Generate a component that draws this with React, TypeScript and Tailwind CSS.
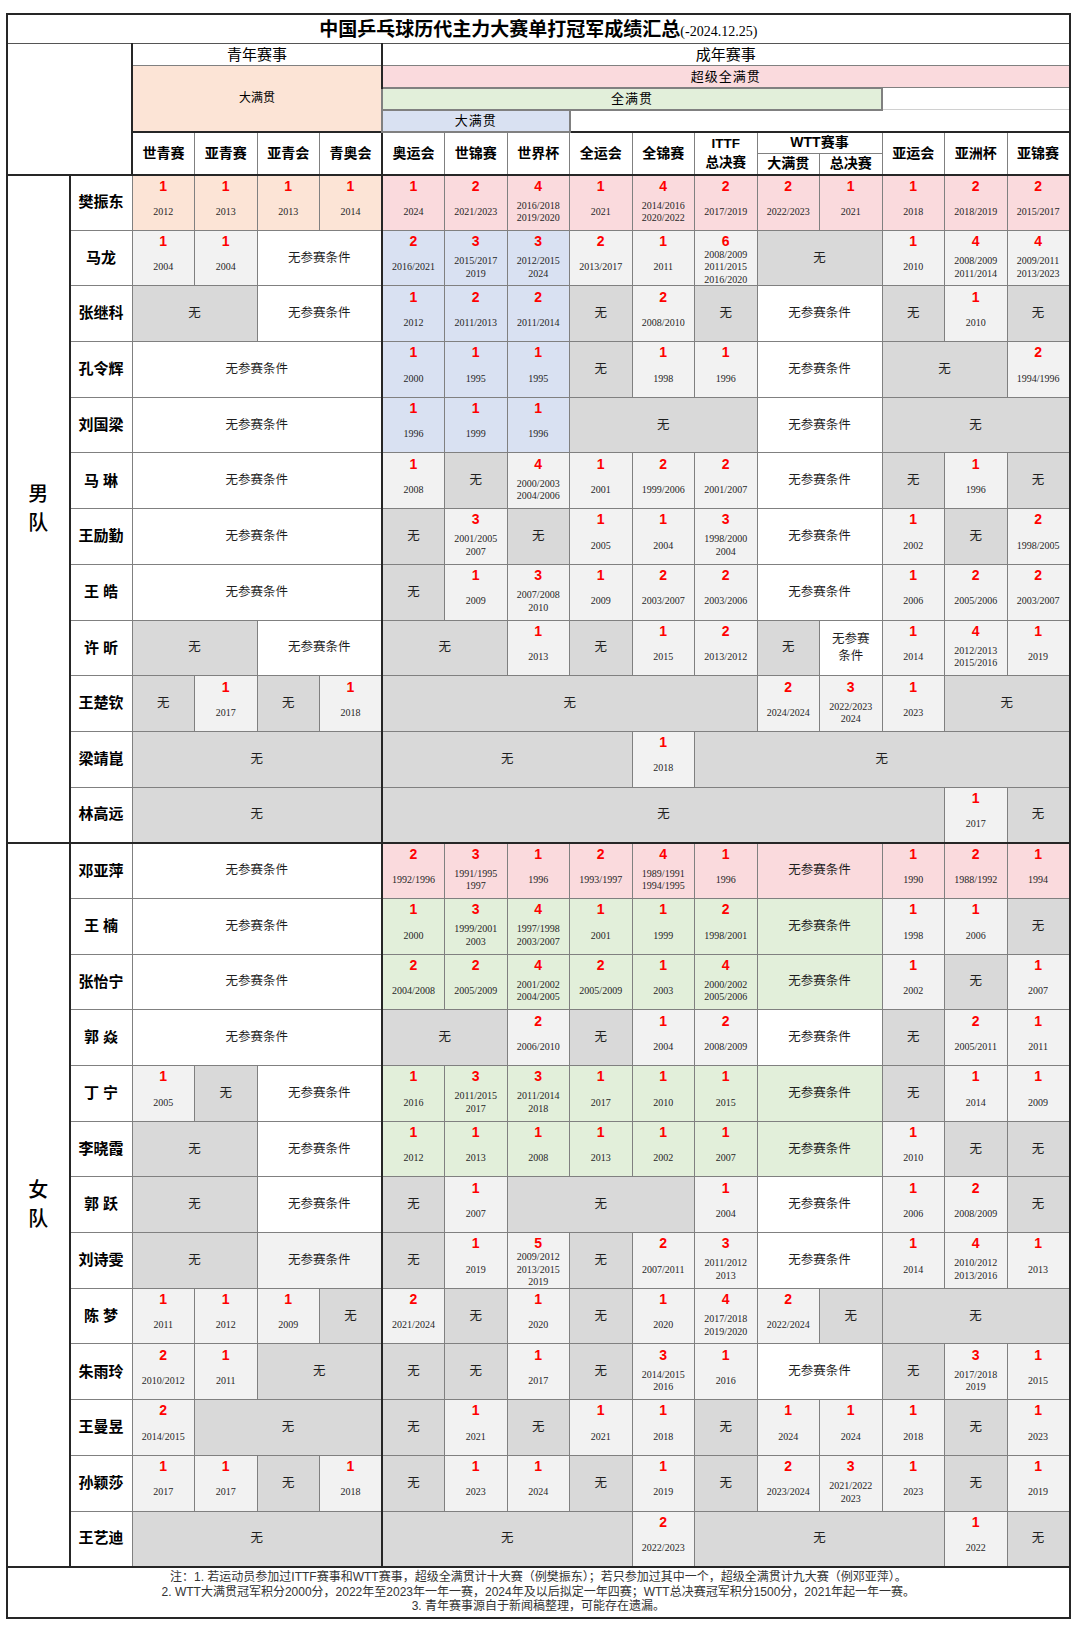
import React from "react";

type Bg = "P" | "K" | "B" | "G" | "L" | "N" | "W";
type Cell = { kind: "win" | "none" | "nc"; span: number; bg: Bg; num?: number; years?: string[]; lines?: string[] };

const w = (num: number, years: string, bg: Bg = "L", span = 1): Cell => ({ kind: "win", span, bg, num, years: years.split("\n") });
const no = (span = 1): Cell => ({ kind: "none", span, bg: "N" });
const nc = (span = 1, bg: Bg = "W", lines: string[] = ["无参赛条件"]): Cell => ({ kind: "nc", span, bg, lines });

const BG: Record<Bg, string> = {
  P: "bg-[#fce4d6]",
  K: "bg-[#fadadd]",
  B: "bg-[#d9e1f2]",
  G: "bg-[#e2efda]",
  L: "bg-[#f2f2f2]",
  N: "bg-[#d9d9d9]",
  W: "bg-white",
};

const men: { name: string; cells: Cell[] }[] = [
  {
    name: "樊振东",
    cells: [
      w(1, "2012", "P"), w(1, "2013", "P"), w(1, "2013", "P"), w(1, "2014", "P"),
      w(1, "2024", "K"), w(2, "2021/2023", "K"), w(4, "2016/2018\n2019/2020", "K"), w(1, "2021", "K"),
      w(4, "2014/2016\n2020/2022", "K"), w(2, "2017/2019", "K"), w(2, "2022/2023", "K"), w(1, "2021", "K"),
      w(1, "2018", "K"), w(2, "2018/2019", "K"), w(2, "2015/2017", "K"),
    ],
  },
  {
    name: "马龙",
    cells: [
      w(1, "2004"), w(1, "2004"), nc(2),
      w(2, "2016/2021", "B"), w(3, "2015/2017\n2019", "B"), w(3, "2012/2015\n2024", "B"),
      w(2, "2013/2017"), w(1, "2011"), w(6, "2008/2009\n2011/2015\n2016/2020"), no(2),
      w(1, "2010"), w(4, "2008/2009\n2011/2014"), w(4, "2009/2011\n2013/2023"),
    ],
  },
  {
    name: "张继科",
    cells: [
      no(2), nc(2), w(1, "2012", "B"), w(2, "2011/2013", "B"), w(2, "2011/2014", "B"),
      no(), w(2, "2008/2010"), no(), nc(2), no(), w(1, "2010"), no(),
    ],
  },
  {
    name: "孔令辉",
    cells: [
      nc(4), w(1, "2000", "B"), w(1, "1995", "B"), w(1, "1995", "B"),
      no(), w(1, "1998"), w(1, "1996"), nc(2), no(2), w(2, "1994/1996"),
    ],
  },
  {
    name: "刘国梁",
    cells: [nc(4), w(1, "1996", "B"), w(1, "1999", "B"), w(1, "1996", "B"), no(3), nc(2), no(3)],
  },
  {
    name: "马 琳",
    cells: [
      nc(4), w(1, "2008"), no(), w(4, "2000/2003\n2004/2006"), w(1, "2001"), w(2, "1999/2006"),
      w(2, "2001/2007"), nc(2), no(), w(1, "1996"), no(),
    ],
  },
  {
    name: "王励勤",
    cells: [
      nc(4), no(), w(3, "2001/2005\n2007"), no(), w(1, "2005"), w(1, "2004"),
      w(3, "1998/2000\n2004"), nc(2), w(1, "2002"), no(), w(2, "1998/2005"),
    ],
  },
  {
    name: "王 皓",
    cells: [
      nc(4), no(), w(1, "2009"), w(3, "2007/2008\n2010"), w(1, "2009"), w(2, "2003/2007"),
      w(2, "2003/2006"), nc(2), w(1, "2006"), w(2, "2005/2006"), w(2, "2003/2007"),
    ],
  },
  {
    name: "许 昕",
    cells: [
      no(2), nc(2), no(2), w(1, "2013"), no(), w(1, "2015"), w(2, "2013/2012"), no(),
      nc(1, "W", ["无参赛", "条件"]), w(1, "2014"), w(4, "2012/2013\n2015/2016"), w(1, "2019"),
    ],
  },
  {
    name: "王楚钦",
    cells: [
      no(), w(1, "2017"), no(), w(1, "2018"), no(6), w(2, "2024/2024"),
      w(3, "2022/2023\n2024"), w(1, "2023"), no(2),
    ],
  },
  { name: "梁靖崑", cells: [no(4), no(4), w(1, "2018"), no(6)] },
  { name: "林高远", cells: [no(4), no(9), w(1, "2017"), no()] },
];

const women: { name: string; cells: Cell[] }[] = [
  {
    name: "邓亚萍",
    cells: [
      nc(4), w(2, "1992/1996", "K"), w(3, "1991/1995\n1997", "K"), w(1, "1996", "K"), w(2, "1993/1997", "K"),
      w(4, "1989/1991\n1994/1995", "K"), w(1, "1996", "K"), nc(2, "K"), w(1, "1990", "K"),
      w(2, "1988/1992", "K"), w(1, "1994", "K"),
    ],
  },
  {
    name: "王 楠",
    cells: [
      nc(4), w(1, "2000", "G"), w(3, "1999/2001\n2003", "G"), w(4, "1997/1998\n2003/2007", "G"),
      w(1, "2001", "G"), w(1, "1999", "G"), w(2, "1998/2001", "G"), nc(2, "G"),
      w(1, "1998"), w(1, "2006"), no(),
    ],
  },
  {
    name: "张怡宁",
    cells: [
      nc(4), w(2, "2004/2008", "G"), w(2, "2005/2009", "G"), w(4, "2001/2002\n2004/2005", "G"),
      w(2, "2005/2009", "G"), w(1, "2003", "G"), w(4, "2000/2002\n2005/2006", "G"), nc(2, "G"),
      w(1, "2002"), no(), w(1, "2007"),
    ],
  },
  {
    name: "郭 焱",
    cells: [
      nc(4), no(2), w(2, "2006/2010"), no(), w(1, "2004"), w(2, "2008/2009"), nc(2),
      no(), w(2, "2005/2011"), w(1, "2011"),
    ],
  },
  {
    name: "丁 宁",
    cells: [
      w(1, "2005"), no(), nc(2), w(1, "2016", "G"), w(3, "2011/2015\n2017", "G"),
      w(3, "2011/2014\n2018", "G"), w(1, "2017", "G"), w(1, "2010", "G"), w(1, "2015", "G"),
      nc(2, "G"), no(), w(1, "2014"), w(1, "2009"),
    ],
  },
  {
    name: "李晓霞",
    cells: [
      no(2), nc(2), w(1, "2012", "G"), w(1, "2013", "G"), w(1, "2008", "G"), w(1, "2013", "G"),
      w(1, "2002", "G"), w(1, "2007", "G"), nc(2, "G"), w(1, "2010"), no(), no(),
    ],
  },
  {
    name: "郭 跃",
    cells: [
      no(2), nc(2), no(), w(1, "2007"), no(3), w(1, "2004"), nc(2), w(1, "2006"),
      w(2, "2008/2009"), no(),
    ],
  },
  {
    name: "刘诗雯",
    cells: [
      no(2), nc(2, "L"), no(), w(1, "2019"), w(5, "2009/2012\n2013/2015\n2019"), no(),
      w(2, "2007/2011"), w(3, "2011/2012\n2013"), nc(2), w(1, "2014"),
      w(4, "2010/2012\n2013/2016"), w(1, "2013"),
    ],
  },
  {
    name: "陈 梦",
    cells: [
      w(1, "2011"), w(1, "2012"), w(1, "2009"), no(), w(2, "2021/2024"), no(), w(1, "2020"),
      no(), w(1, "2020"), w(4, "2017/2018\n2019/2020"), w(2, "2022/2024"), no(), no(3),
    ],
  },
  {
    name: "朱雨玲",
    cells: [
      w(2, "2010/2012"), w(1, "2011"), no(2), no(), no(), w(1, "2017"), no(),
      w(3, "2014/2015\n2016"), w(1, "2016"), nc(2), no(), w(3, "2017/2018\n2019"), w(1, "2015"),
    ],
  },
  {
    name: "王曼昱",
    cells: [
      w(2, "2014/2015"), no(3), no(), w(1, "2021"), no(), w(1, "2021"), w(1, "2018"), no(),
      w(1, "2024"), w(1, "2024"), w(1, "2018"), no(), w(1, "2023"),
    ],
  },
  {
    name: "孙颖莎",
    cells: [
      w(1, "2017"), w(1, "2017"), no(), w(1, "2018"), no(), w(1, "2023"), w(1, "2024"), no(),
      w(1, "2019"), no(), w(2, "2023/2024"), w(3, "2021/2022\n2023"), w(1, "2023"), no(), w(1, "2019"),
    ],
  },
  { name: "王艺迪", cells: [no(4), no(4), w(2, "2022/2023"), no(4), w(1, "2022"), no()] },
];

const cellBase = "border border-[#808080] p-0 text-center align-middle";

function DataCells({ cells, topThick }: { cells: Cell[]; topThick: boolean }) {
  let col = 0;
  return (
    <>
      {cells.map((c, i) => {
        const start = col;
        col += c.span;
        const cls = [
          cellBase,
          BG[c.bg],
          start === 4 ? "border-l-2 border-l-[#262626]" : "",
          topThick ? "border-t-2 border-t-[#262626]" : "",
        ].join(" ");
        if (c.kind === "win") {
          return (
            <td key={i} colSpan={c.span} className={cls}>
              <div className="flex h-[54px] flex-col items-center">
                <div className="h-[20px] shrink-0 font-['Liberation_Sans'] text-[14px] leading-[20px] font-bold text-[#ff0000]">
                  {c.num}
                </div>
                <div className="flex min-h-0 flex-1 flex-col items-center justify-center pb-[1px] font-['Liberation_Serif'] text-[10px] leading-[12.5px] text-[#262626]">
                  {c.years!.map((y) => (
                    <span key={y} className="shrink-0">{y}</span>
                  ))}
                </div>
              </div>
            </td>
          );
        }
        return (
          <td key={i} colSpan={c.span} className={cls}>
            <div className="flex flex-col items-center justify-center text-[12.5px] leading-[17px] text-[#1f1f1f]">
              {c.kind === "none" ? <span>无</span> : c.lines!.map((l) => <span key={l}>{l}</span>)}
            </div>
          </td>
        );
      })}
    </>
  );
}

const colHeads = ["世青赛", "亚青赛", "亚青会", "青奥会", "奥运会", "世锦赛", "世界杯", "全运会", "全锦赛"];

export default function App() {
  return (
    <div className="min-h-[1630px] w-[1080px] bg-white pt-[13px] pl-[6px] font-['Liberation_Sans','Noto_Sans_CJK_SC',sans-serif] text-black">
      <table className="w-[1063px] table-fixed border-collapse border-2 border-[#262626]">
        <colgroup>
          {Array.from({ length: 17 }).map((_, i) => (
            <col key={i} className="w-[62.5px]" />
          ))}
        </colgroup>
        <tbody>
          <tr className="h-[28px]">
            <td colSpan={17} className="border-b border-[#555] p-0 text-center">
              <span className="font-['Noto_Sans_CJK_SC',sans-serif] text-[19px] leading-[26px] font-bold">
                中国乒乓球历代主力大赛单打冠军成绩汇总
              </span>
              <span className="font-['Liberation_Serif',serif] text-[14px]">(-2024.12.25)</span>
            </td>
          </tr>
          <tr className="h-[22px]">
            <td colSpan={2} rowSpan={6} className="border border-[#808080] border-r-2 border-r-[#262626] border-b-2 border-b-[#262626] bg-white" />
            <td colSpan={4} className={cellBase + " text-[15px] leading-[20px]"}>青年赛事</td>
            <td colSpan={11} className={cellBase + " border-l-2 border-l-[#262626] text-[15px] leading-[20px]"}>成年赛事</td>
          </tr>
          <tr className="h-[22px]">
            <td colSpan={4} rowSpan={3} className={cellBase + " bg-[#fce4d6] text-[12px]"}>大满贯</td>
            <td colSpan={11} className={cellBase + " border-l-2 border-l-[#262626] bg-[#fadadd] text-[13px] tracking-[1px]"}>超级全满贯</td>
          </tr>
          <tr className="h-[22px]">
            <td colSpan={8} className={cellBase + " border-2 border-[#262626] bg-[#e2efda] text-[13px] tracking-[1px]"}>全满贯</td>
            <td colSpan={3} className="border border-[#d0d0d0] bg-white" />
          </tr>
          <tr className="h-[22px]">
            <td colSpan={3} className={cellBase + " border-2 border-[#262626] bg-[#d9e1f2] text-[13px] tracking-[1px]"}>大满贯</td>
            <td colSpan={8} className="border border-[#d0d0d0] bg-white" />
          </tr>
          <tr className="h-[21.5px]">
            {colHeads.map((h, i) => (
              <td
                key={h}
                rowSpan={2}
                className={
                  cellBase +
                  " border-t-2 border-t-[#262626] border-b-2 border-b-[#262626] bg-white text-[14px] font-bold" +
                  (i === 4 ? " border-l-2 border-l-[#262626]" : "")
                }
              >
                {h}
              </td>
            ))}
            <td rowSpan={2} className={cellBase + " border-t-2 border-t-[#262626] border-b-2 border-b-[#262626] bg-white text-[13.5px] leading-[19px] font-bold"}>
              <div>ITTF</div>
              <div>总决赛</div>
            </td>
            <td colSpan={2} className={cellBase + " border-t-2 border-t-[#262626] bg-white text-[14px] leading-[19px] font-bold"}>
              WTT赛事
            </td>
            {["亚运会", "亚洲杯", "亚锦赛"].map((h) => (
              <td key={h} rowSpan={2} className={cellBase + " border-t-2 border-t-[#262626] border-b-2 border-b-[#262626] bg-white text-[14px] font-bold"}>
                {h}
              </td>
            ))}
          </tr>
          <tr className="h-[21.5px]">
            <td className={cellBase + " border-b-2 border-b-[#262626] bg-white text-[14px] leading-[19px] font-bold"}>大满贯</td>
            <td className={cellBase + " border-b-2 border-b-[#262626] bg-white text-[14px] leading-[19px] font-bold"}>总决赛</td>
          </tr>

          {men.map((r, i) => (
            <tr key={r.name} className="h-[55.7px]">
              {i === 0 && (
                <td rowSpan={men.length} className="border border-[#808080] border-r-2 border-r-[#262626] bg-white p-0 text-center align-middle">
                  <div className="flex flex-col items-center text-[20px] leading-[29px] font-medium">
                    <span>男</span>
                    <span>队</span>
                  </div>
                </td>
              )}
              <td className={cellBase + " bg-white text-[15px] font-bold whitespace-pre"}>{r.name}</td>
              <DataCells cells={r.cells} topThick={false} />
            </tr>
          ))}

          {women.map((r, i) => (
            <tr key={r.name} className="h-[55.7px]">
              {i === 0 && (
                <td rowSpan={women.length} className="border border-[#808080] border-t-2 border-t-[#262626] border-r-2 border-r-[#262626] bg-white p-0 text-center align-middle">
                  <div className="flex flex-col items-center text-[20px] leading-[29px] font-medium">
                    <span>女</span>
                    <span>队</span>
                  </div>
                </td>
              )}
              <td className={cellBase + " bg-white text-[15px] font-bold whitespace-pre" + (i === 0 ? " border-t-2 border-t-[#262626]" : "")}>
                {r.name}
              </td>
              <DataCells cells={r.cells} topThick={i === 0} />
            </tr>
          ))}

          <tr className="h-[51px]">
            <td colSpan={17} className="border-t-2 border-t-[#262626] p-0 text-center text-[12px] leading-[14.5px] text-[#333]">
              <div>注：1. 若运动员参加过ITTF赛事和WTT赛事，超级全满贯计十大赛（例樊振东）；若只参加过其中一个，超级全满贯计九大赛（例邓亚萍）。</div>
              <div>2. WTT大满贯冠军积分2000分，2022年至2023年一年一赛，2024年及以后拟定一年四赛；WTT总决赛冠军积分1500分，2021年起一年一赛。</div>
              <div>3. 青年赛事源自于新闻稿整理，可能存在遗漏。</div>
            </td>
          </tr>
        </tbody>
      </table>
    </div>
  );
}
